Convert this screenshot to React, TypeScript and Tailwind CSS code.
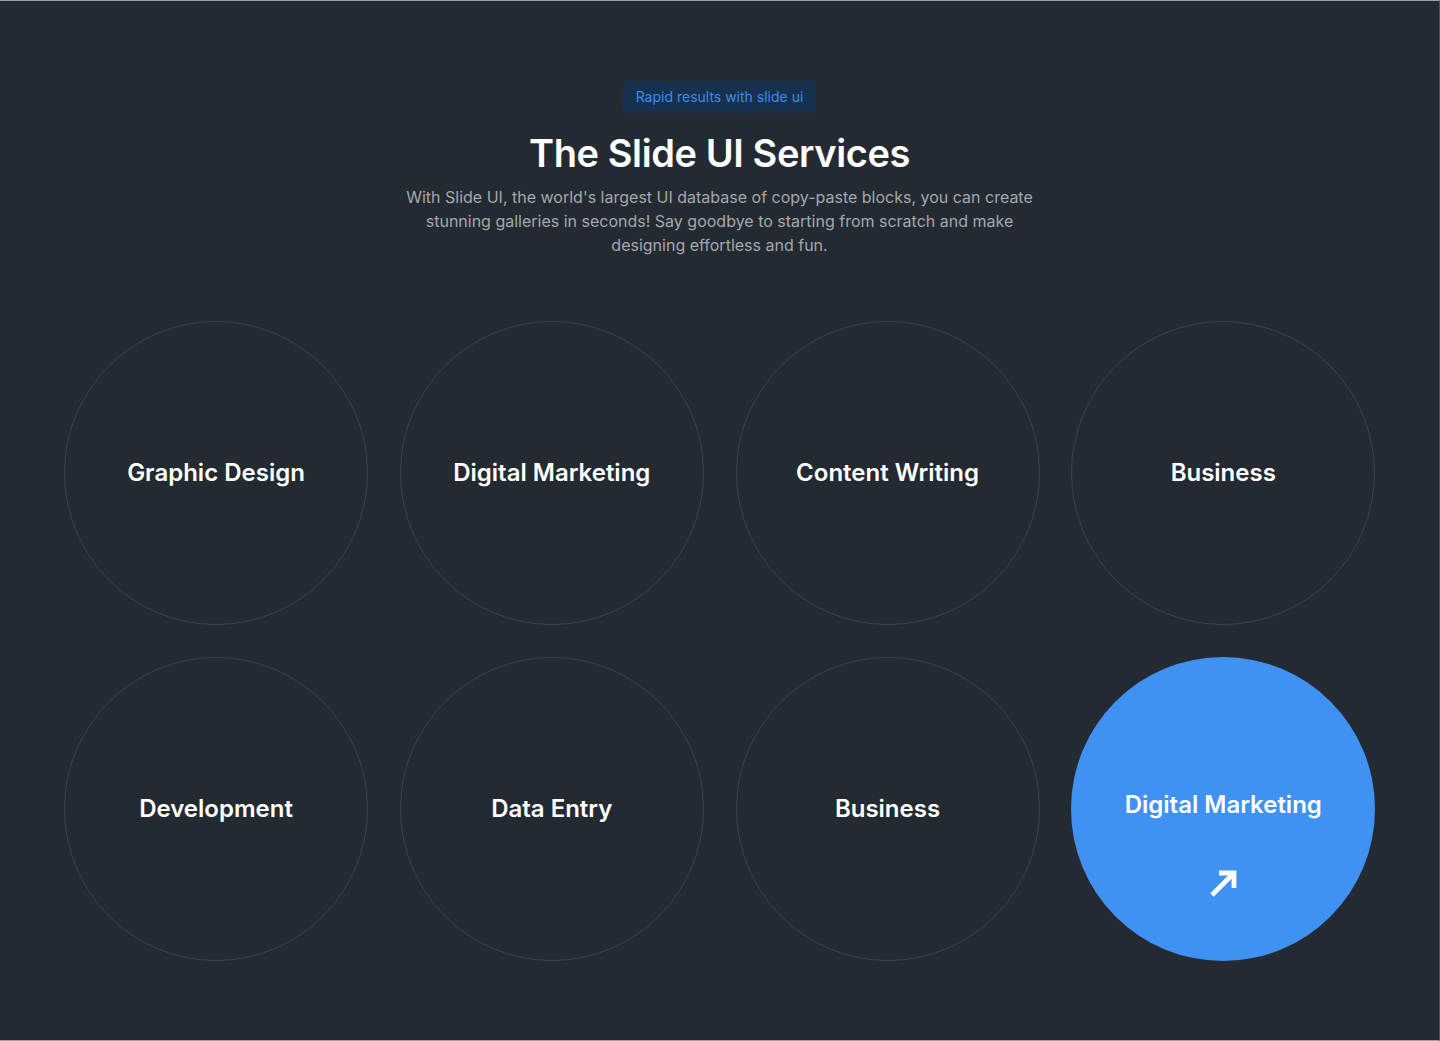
import React from "react";

const items = [
  "Graphic Design",
  "Digital Marketing",
  "Content Writing",
  "Business",
  "Development",
  "Data Entry",
  "Business",
];

export default function App() {
  return (
    <div
      className="min-h-[1041px] w-full bg-[#242a31] border-y border-y-[#9aa0a6] border-r border-r-[#4a5058] px-16 pt-20"
      style={{ fontFamily: "Inter, 'Noto Sans', sans-serif" }}
    >
      <div className="flex flex-col items-center">
        <span className="rounded bg-[#16304d] px-[13px] py-[6px] text-sm leading-5 text-[#3b8cf0]">
          Rapid results with slide ui
        </span>
        <h1 className="mt-[16px] text-[38px] leading-[48px] font-semibold tracking-[-0.4px] text-white">
          The Slide UI Services
        </h1>
        <p className="mt-2 max-w-[640px] text-center text-base leading-6 text-[#a3a8ae]">
          With Slide UI, the world's largest UI database of copy-paste blocks, you can create
          stunning galleries in seconds! Say goodbye to starting from scratch and make
          designing effortless and fun.
        </p>
      </div>
      <div className="mt-[64px] grid grid-cols-4 gap-8">
        {items.map((t, i) => (
          <div
            key={i}
            className="flex h-[304px] w-[304px] items-center justify-center rounded-full border border-[#3c434b]"
          >
            <span className="text-2xl font-semibold text-white">{t}</span>
          </div>
        ))}
        <div className="flex h-[304px] w-[304px] flex-col items-center rounded-full bg-[#3f92f2] pt-[132px]">
          <span className="text-2xl leading-8 font-semibold text-white">Digital Marketing</span>
          <svg
            className="mt-[46px] ml-[2px]"
            width="32"
            height="32"
            viewBox="0 0 32 32"
            fill="none"
            stroke="white"
            strokeWidth="4.8"
            strokeLinecap="butt"
            strokeLinejoin="miter"
          >
            <path d="M4 28L26 6" />
            <path d="M11 6h15v15" />
          </svg>
        </div>
      </div>
    </div>
  );
}
